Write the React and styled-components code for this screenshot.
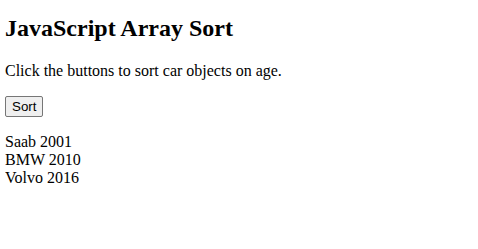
import React, { useState } from "react";
import styled, { createGlobalStyle } from "styled-components";

const GlobalStyle = createGlobalStyle`
  body {
    margin: 0 5px;
    font-family: "Liberation Serif", "Times New Roman", serif;
    font-size: 16px;
    color: #000;
    background: #fff;
  }
`;

const Title = styled.h2`
  font-size: 24px;
  font-weight: bold;
  margin: 15px 0 19.92px;
`;

const Text = styled.p`
  margin: 16px 0;
`;

const SortButton = styled.button`
  font-family: "Liberation Sans", Arial, sans-serif;
  font-size: 13.33px;
  color: #000;
  background: #efefef;
  border: 1px solid #767676;
  border-radius: 2px;
  padding: 2px 6px;
`;

const cars = [
  { type: "Volvo", year: 2016 },
  { type: "Saab", year: 2001 },
  { type: "BMW", year: 2010 },
];

function App() {
  const [list, setList] = useState([...cars].sort((a, b) => a.year - b.year));

  return (
    <>
      <GlobalStyle />
      <Title>JavaScript Array Sort</Title>
      <Text>Click the buttons to sort car objects on age.</Text>
      <SortButton onClick={() => setList([...list].sort((a, b) => a.year - b.year))}>
        Sort
      </SortButton>
      <Text>
        {list.map((car) => (
          <React.Fragment key={car.type}>
            {car.type} {car.year}
            <br />
          </React.Fragment>
        ))}
      </Text>
    </>
  );
}

export default App;
